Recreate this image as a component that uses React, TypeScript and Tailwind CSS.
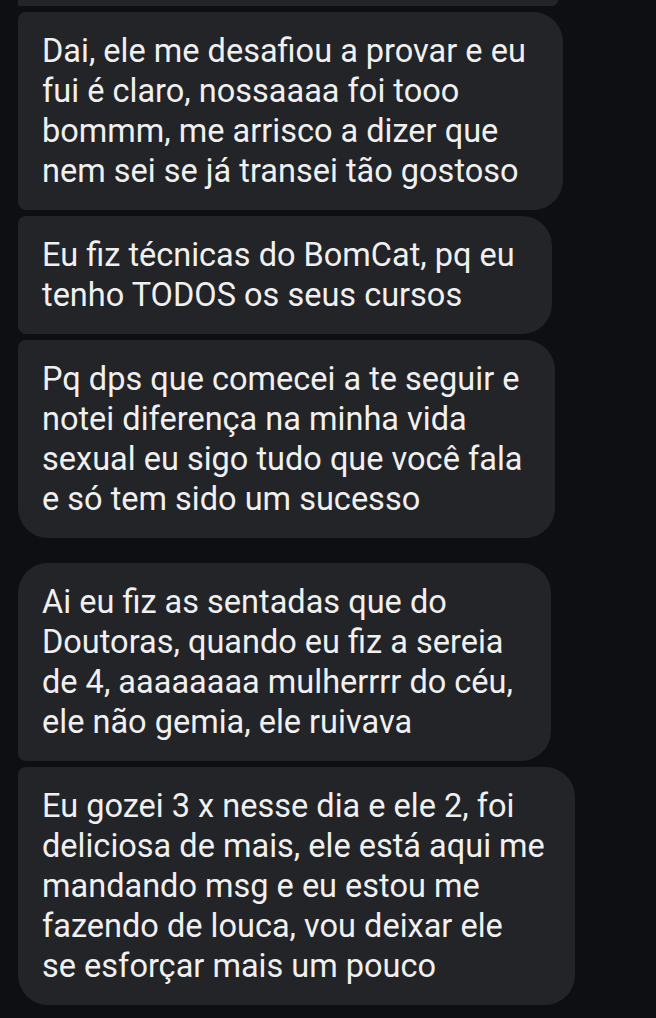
import React from "react";

type B = { lines: string[]; w: string; tl: string; bl: string };

const bubbles: B[] = [
  {
    lines: [
      "Dai, ele me desafiou a provar e eu",
      "fui é claro, nossaaaa foi tooo",
      "bommm, me arrisco a dizer que",
      "nem sei se já transei tão gostoso",
    ],
    w: "w-[545px]",
    tl: "rounded-tl-[8px]",
    bl: "rounded-bl-[8px]",
  },
  {
    lines: ["Eu fiz técnicas do BomCat, pq eu", "tenho TODOS os seus cursos"],
    w: "w-[534px]",
    tl: "rounded-tl-[8px]",
    bl: "rounded-bl-[8px]",
  },
  {
    lines: [
      "Pq dps que comecei a te seguir e",
      "notei diferença na minha vida",
      "sexual eu sigo tudo que você fala",
      "e só tem sido um sucesso",
    ],
    w: "w-[537px]",
    tl: "rounded-tl-[8px]",
    bl: "rounded-bl-[30px]",
  },
];

const bubbles2: B[] = [
  {
    lines: [
      "Ai eu fiz as sentadas que do",
      "Doutoras, quando eu fiz a sereia",
      "de 4, aaaaaaaa mulherrrr do céu,",
      "ele não gemia, ele ruivava",
    ],
    w: "w-[533px]",
    tl: "rounded-tl-[30px]",
    bl: "rounded-bl-[8px]",
  },
  {
    lines: [
      "Eu gozei 3 x nesse dia e ele 2, foi",
      "deliciosa de mais, ele está aqui me",
      "mandando msg e eu estou me",
      "fazendo de louca, vou deixar ele",
      "se esforçar mais um pouco",
    ],
    w: "w-[557px]",
    tl: "rounded-tl-[8px]",
    bl: "rounded-bl-[30px]",
  },
];

function Bubble({ b }: { b: B }) {
  return (
    <div
      className={`${b.w} ${b.tl} ${b.bl} rounded-tr-[30px] rounded-br-[30px] bg-[#222428] pl-6 py-[19px] text-[32.5px] leading-[40px] text-[#f0f0f0]`}
    >
      {b.lines.map((l, i) => (
        <div key={i} className="whitespace-nowrap">
          {l}
        </div>
      ))}
    </div>
  );
}

export default function App() {
  return (
    <div
      className="w-[656px] h-[1018px] overflow-hidden bg-[#0d0f13] pl-[18px]"
      style={{ fontFamily: "Roboto, 'Noto Sans', sans-serif" }}
    >
      <div className="flex flex-col gap-[6px]">
        <div className="w-[540px] h-[6px] bg-[#222428] rounded-br-[30px] rounded-bl-[6px]" />
        {bubbles.map((b, i) => (
          <Bubble key={i} b={b} />
        ))}
      </div>
      <div className="flex flex-col gap-[6px] mt-[25px]">
        {bubbles2.map((b, i) => (
          <Bubble key={i} b={b} />
        ))}
      </div>
    </div>
  );
}
